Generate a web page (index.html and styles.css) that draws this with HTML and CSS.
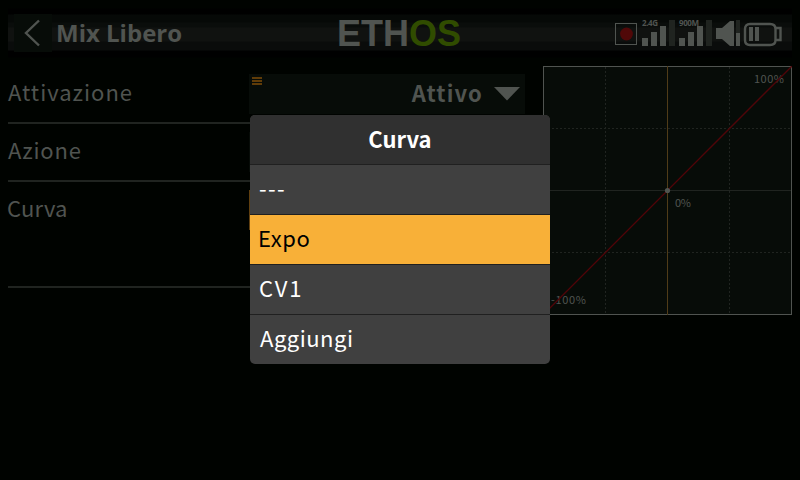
FILE: index.html
```
<!DOCTYPE html>
<html lang="it">
<head>
<meta charset="utf-8">
<title>Mix Libero</title>
<link rel="stylesheet" href="styles.css">
</head>
<body>
<header class="topbar">
  <button class="back" aria-label="Indietro"><svg width="38" height="38" viewBox="0 0 38 38"><path d="M25 6.500 12 19 25 31.500"/></svg></button>
  <h1 class="title">Mix Libero</h1>
  <svg class="logo" width="128" height="44" viewBox="0 0 128 44">
    <text x="2" y="35" textLength="124" lengthAdjust="spacingAndGlyphs">ETH<tspan class="green">OS</tspan></text>
  </svg>
  <svg class="status" width="170" height="38" viewBox="0 0 170 38">
    <rect x="1.500" y="9.500" width="21" height="21" fill="none" stroke="#505450"/>
    <circle cx="12.500" cy="20" r="6.400" fill="#500808"/>
    <g fill="#505450">
      <path d="M28 24h6v8h-6zM37 18h6v14h-6zM46 12h6v20h-6zM65 24h6v8h-6zM74 18h6v14h-6zM83 12h6v20h-6zM122 19h4v13h-4z"/>
      <path d="M102 14h6l8-7h4v25h-4l-8-7h-6z"/>
      <path d="M135 13h4v14h-4zM141 13h4v14h-4z"/>
      <text x="28" y="12" textLength="16">2.4G</text>
      <text x="65" y="12" textLength="20">900M</text>
    </g>
    <path fill="#202420" d="M55 6h6v26h-6zM92 6h6v26h-6zM122 6h4v13h-4z"/>
    <path fill="none" stroke="#505450" stroke-width="2.400" d="M162 14h4.500v12h-4.500M136 10h20q5.500 0 5.500 5v11q0 5-5.500 5h-20q-5 0-5-5v-11q0-5 5-5z"/>
  </svg>
</header>
<main class="page">
  <section class="form">
    <div class="row"><span class="label">Attivazione</span>
      <div class="select">
        <svg class="handle" width="10" height="8"><path d="M0 0h10v2H0zM0 3h10v2H0zM0 6h10v2H0z"/></svg>
        <span class="value">Attivo</span>
        <svg class="arrow" width="26" height="14"><path d="M0 0h26L13 13.500z"/></svg>
      </div>
    </div>
    <div class="row"><span class="label azione">Azione</span><div class="select"></div></div>
    <div class="row tall"><span class="label curva">Curva</span><div class="select focused"></div></div>
  </section>
  <svg class="chart" width="249" height="249" viewBox="0 0 249 249">
    <rect x=".5" y=".5" width="248" height="248" fill="#070c08" stroke="#505450"/>
    <path class="grid" d="M62.500 1v247M186.500 1v247M1 62.500h247M1 186.500h247"/>
    <path stroke="#202420" d="M1 124.500h247"/>
    <path stroke="#503c18" d="M124.500 0v249"/>
    <text x="211" y="17" textLength="30">100%</text>
    <text x="132" y="141" textLength="16">0%</text>
    <text x="8" y="238" textLength="35">-100%</text>
    <path stroke="#500408" stroke-width="1.300" d="M0 249 249 0"/>
    <circle cx="124.500" cy="124.500" r="2.600" fill="#505450"/>
  </svg>
</main>
<div class="menu" role="listbox">
  <div class="menu-head">Curva</div>
  <div class="option dashes">---</div>
  <div class="option active">Expo</div>
  <div class="option cv">CV1</div>
  <div class="option add">Aggiungi</div>
</div>
</body>
</html>
```
FILE: styles.css
```
* { box-sizing: border-box; }
body {
  margin: 0;
  width: 800px;
  height: 480px;
  overflow: hidden;
  background: #000300;
  color: #505450;
  font-family: "Noto Sans CJK SC", sans-serif;
  font-size: 22px;
}
svg { display: block; flex: none; }
.topbar {
  display: flex;
  align-items: center;
  margin: 0 8px;
  height: 66px;
  background: linear-gradient(#000300 8px, #000 9px 14px, #060907 15px 22px, #0a0d0b 23px 27px, #101210 28px 41px, #0a0c0b 42px 50px, #000 51px 57px, #000300 58px);
}
.back { border: 0; padding: 0; margin: 0 0 0 6px; background: #070c08; }
.back path { fill: none; stroke: #505450; stroke-width: 2.400; }
.title { margin: 0; padding-left: 4px; width: 283px; font: bold 24px/38px "Open Sans", sans-serif; }
.logo { overflow: visible; }
.logo text { font: bold 36px "Liberation Sans", sans-serif; fill: #505450; }
.logo .green { fill: #304c00; }
.status { margin-left: 151px; overflow: visible; }
.status text { font: bold 8px "Open Sans", sans-serif; }
.page { display: flex; gap: 18px; padding-left: 8px; }
.form { width: 517px; }
.row { display: flex; justify-content: space-between; height: 58px; padding-top: 8px; border-bottom: 2px solid #202420; }
.row.tall { height: 106px; }
.label { height: 40px; line-height: 35px; letter-spacing: 1px; }
.azione { letter-spacing: 0.800px; }
.curva { margin-left: -1px; letter-spacing: 0.200px; }
.select { display: flex; position: relative; align-items: center; justify-content: flex-end; width: 276px; height: 40px; background: #070c08; padding-right: 5px; }
.focused { border: 1px solid #604010; }
.handle { position: absolute; left: 3px; top: 3px; fill: #603c08; }
.value { font-weight: bold; letter-spacing: 1.100px; height: 40px; line-height: 36px; margin-right: 11px; }
.arrow { fill: #505450; }
.chart .grid { stroke: #202420; stroke-dasharray: 2 2; }
.chart text { font: 11px "Noto Sans CJK SC", sans-serif; fill: #505450; }
.menu {
  position: absolute;
  left: 250px;
  top: 115px;
  width: 300px;
  border-radius: 5px;
  overflow: hidden;
  background: #404040;
  color: #fff;
}
.menu-head { height: 50px; line-height: 46px; background: #303030; text-align: center; font-weight: bold; letter-spacing: 0; border-bottom: 1px solid #202020; }
.option { height: 50px; line-height: 45px; padding-left: 9px; letter-spacing: 0.600px; border-bottom: 1px solid #202020; }
.option:last-child { height: 49px; border: 0; }
.active { background: #f8b038; color: #000; padding-left: 8px; }
.dashes { letter-spacing: 1.400px; }
.cv { letter-spacing: 1.800px; }
.add { padding-left: 10px; letter-spacing: 0.500px; }
```
